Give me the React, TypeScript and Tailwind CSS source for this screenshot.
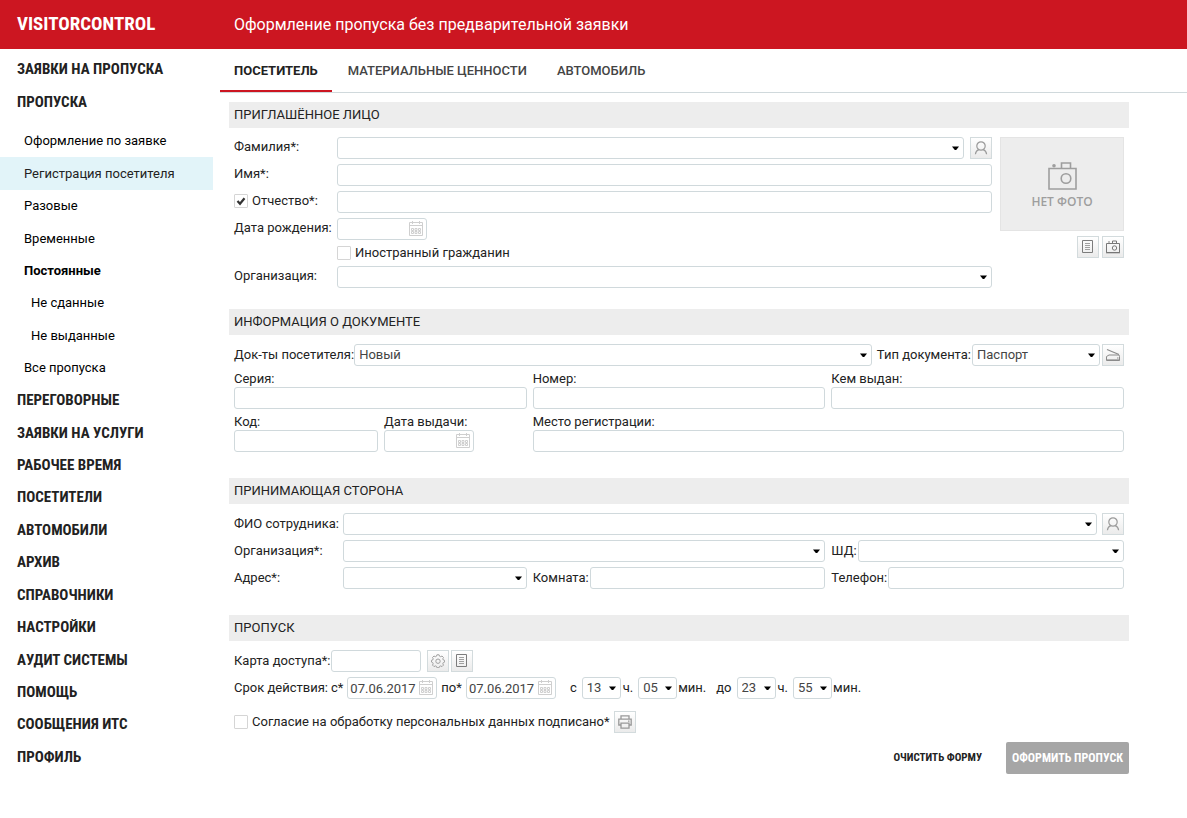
import { useState } from 'react';
import type { InputHTMLAttributes, ReactNode } from 'react';
import clsx from 'clsx';

const topMenu = ['Заявки на пропуска', 'Пропуска'];

const passMenu = [
  { title: 'Оформление по заявке' },
  { title: 'Регистрация посетителя', active: true },
  { title: 'Разовые' },
  { title: 'Временные' },
  { title: 'Постоянные', bold: true },
  { title: 'Не сданные', nested: true },
  { title: 'Не выданные', nested: true },
  { title: 'Все пропуска' },
];

const bottomMenu = [
  'Переговорные',
  'Заявки на услуги',
  'Рабочее время',
  'Посетители',
  'Автомобили',
  'Архив',
  'Справочники',
  'Настройки',
  'Аудит системы',
  'Помощь',
  'Сообщения ИТС',
  'Профиль',
];

const tabs = ['Посетитель', 'Материальные ценности', 'Автомобиль'];

function PersonIcon() {
  return (
    <svg width="14" height="14" viewBox="0 0 14 14" fill="none" stroke="#9a9a9a" strokeWidth="1.2">
      <circle cx="7" cy="5" r="4.2" />
      <path d="M4.8 8.6C2.8 9.4 1.6 11 1.4 13.2M9.2 8.6c2 .8 3.2 2.4 3.4 4.6" />
    </svg>
  );
}

function ListIcon() {
  return (
    <svg width="12" height="14" viewBox="0 0 12 14" fill="none" stroke="#7c7c7c">
      <path d="M.5 .5h10v12H.5z" />
      <path d="M3 3.5h5M3 5.5h5M3 7.5h5M3 9.5h5" stroke="#a0a0a0" />
    </svg>
  );
}

function CameraIcon() {
  return (
    <svg width="14" height="14" viewBox="0 0 14 14" fill="none" stroke="#777">
      <path d="M.5 3.5h13v9H.5zM6.5 3V1h4v2" />
      <path d="M0 12.800h14" />
      <circle cx="8.500" cy="8" r="2.200" />
      <circle cx="3" cy="2" r=".8" fill="#777" stroke="none" />
    </svg>
  );
}

function ScannerIcon() {
  return (
    <svg width="14" height="14" viewBox="0 0 14 14" fill="none" stroke="#8a8a8a">
      <path d="M1 1.500l12 5" strokeWidth="1.200" />
      <path d="M.5 12.500v-4l2.500-1.500h10l.5 1.500v4z" />
      <path d="M1 11.900h12.500" />
      <path d="M11 10h1.500" />
    </svg>
  );
}

function GearIcon() {
  return (
    <svg width="14" height="14" viewBox="0 0 14 14" fill="none" stroke="#a0a0a0">
      <path d="M5.900 .8h2.200l.4 1.400 1.200.5 1.300-.7 1.500 1.500-.7 1.300.5 1.200 1.300.3v1.800l-1.300.5-.5 1.200.7 1.300-1.500 1.500-1.300-.7-1.200.5-.4 1.300H5.900l-.4-1.300-1.200-.5-1.300.7-1.500-1.500.7-1.300-.5-1.200-1.200-.5V6.300l1.200-.3.500-1.200-.7-1.300L3 2l1.300.7 1.200-.5z" />
      <circle cx="7" cy="7.200" r="2.200" />
    </svg>
  );
}

function PrinterIcon() {
  return (
    <svg width="14" height="14" viewBox="0 0 14 14" fill="none" stroke="#999" strokeWidth="1.300">
      <path d="M3 4V.8h8V4M3 10H.8V4.200h12.400V10H11" />
      <path d="M3 8.200h8v5H3z" />
      <path d="M10 6.200h1.500" />
    </svg>
  );
}

function CalendarIcon() {
  return (
    <svg
      className="pointer-events-none absolute top-[3px] right-1"
      width="14"
      height="15"
      viewBox="0 0 14 15"
      fill="none"
      stroke="#cfcfcf"
    >
      <path d="M.5 1.500h13v13H.5zM0 4.500h14M3.500 0v3M10.500 0v3" />
      <path d="M2.500 7.500h2v2h-2zM6 7.500h2v2H6zM9.500 7.500h2v2h-2zM2.500 10.500h2v2h-2zM6 10.500h2v2H6zM9.500 10.500h2v2h-2z" />
    </svg>
  );
}

function PhotoStub() {
  return (
    <div className="flex h-[94px] flex-col items-center border border-[#e4e4e4] bg-[#ededed] pt-6 text-[#9e9e9e]">
      <svg width="30" height="28" viewBox="0 0 30 28" fill="none" stroke="currentColor" strokeWidth="1.600">
        <path d="M2 6.500h27V27H2zM14.500 6V1h9v5" />
        <circle cx="19" cy="16.500" r="4.800" />
        <circle cx="7" cy="3.800" r="1.800" fill="currentColor" stroke="none" />
      </svg>
      <span className="mt-1 font-['Open_Sans',sans-serif] text-[12px] leading-4 font-semibold">НЕТ ФОТО</span>
    </div>
  );
}

function IconButton({ label, children }: { label: string; children: ReactNode }) {
  return (
    <button
      type="button"
      aria-label={label}
      className="flex size-[22px] shrink-0 items-center justify-center border border-[#d3dbdd] bg-linear-to-b from-white to-[#ebebeb]"
    >
      {children}
    </button>
  );
}

function TextInput({ className, ...props }: InputHTMLAttributes<HTMLInputElement>) {
  return (
    <input
      type="text"
      className={clsx('h-[22px] min-w-0 rounded-[3px] border border-[#d0d9dc] bg-white px-1', className)}
      {...props}
    />
  );
}

function DateInput({ id, value }: { id: string; value?: string }) {
  return (
    <div className="relative w-[90px]">
      <input
        id={id}
        type="text"
        defaultValue={value}
        className="block h-[22px] w-full rounded-[3px] border border-[#d0d9dc] bg-white pr-[20px] pl-[2px] text-[#444]"
      />
      <CalendarIcon />
    </div>
  );
}

interface SelectProps {
  id: string;
  label?: string;
  options?: string[];
  className?: string;
}

function Select({ id, label, options = [''], className }: SelectProps) {
  return (
    <div className={clsx('relative min-w-0', className)}>
      <select
        id={id}
        aria-label={label}
        className="block h-[22px] w-full appearance-none rounded-[3px] border border-[#d0d9dc] bg-white pr-4 pl-1 text-[#444]"
      >
        {options.map((o) => (
          <option key={o}>{o}</option>
        ))}
      </select>
      <svg className="pointer-events-none absolute top-[9px] right-[5px]" width="7" height="4" viewBox="0 0 7 4">
        <path d="M0 .5h7L4.200 4H2.800z" />
      </svg>
    </div>
  );
}

function Checkbox({ id, label, checked = false }: { id: string; label?: string; checked?: boolean }) {
  const [on, setOn] = useState(checked);
  return (
    <span className="relative block size-[14px] shrink-0">
      <input
        id={id}
        type="checkbox"
        aria-label={label}
        checked={on}
        onChange={() => setOn(!on)}
        className="block size-[14px] appearance-none rounded-[1px] border border-[#d5d5d5] bg-white"
      />
      {on && (
        <svg className="pointer-events-none absolute inset-0" width="14" height="14" viewBox="0 0 14 14" fill="none">
          <path d="M3.500 7l2.500 2.800 4.500-5.600" stroke="#333" strokeWidth="2.200" />
        </svg>
      )}
    </span>
  );
}

function Section({ title, className, children }: { title: string; className?: string; children: ReactNode }) {
  return (
    <section className={className}>
      <h2 className="bg-[#ededed] px-[5px] leading-[26px] uppercase">{title}</h2>
      <div className="mt-[9px] px-[5px]">{children}</div>
    </section>
  );
}

function MenuLink({ title }: { title: string }) {
  return (
    <li className="flex items-center">
      <a href="#" className="pl-[17px] font-['Roboto_Condensed',Roboto,sans-serif] text-[15px] leading-5 font-bold uppercase">
        {title}
      </a>
    </li>
  );
}

function Sidebar() {
  return (
    <nav className="w-[213px] shrink-0 pt-1">
      <ul className="grid min-h-[65px] auto-rows-fr">
        {topMenu.map((title) => (
          <MenuLink key={title} title={title} />
        ))}
      </ul>
      <ul className="mt-[7px] grid min-h-[259px] auto-rows-fr text-black">
        {passMenu.map((item) => (
          <li
            key={item.title}
            className={clsx('flex items-center', item.nested ? 'pl-[31px]' : 'pl-6', item.active && 'bg-[#e2f4f9]')}
          >
            <a href="#" className={clsx(item.bold && 'font-bold', item.active && 'text-[#222]')}>
              {item.title}
            </a>
          </li>
        ))}
      </ul>
      <ul className="grid min-h-[389px] auto-rows-fr">
        {bottomMenu.map((title) => (
          <MenuLink key={title} title={title} />
        ))}
      </ul>
    </nav>
  );
}

function VisitorSection() {
  return (
    <Section title="Приглашённое лицо">
      <div className="flex gap-2">
        <div className="grid flex-1 grid-cols-[103px_1fr] gap-y-[5px] leading-5">
          <label htmlFor="surname">Фамилия*:</label>
          <div className="flex gap-[6px]">
            <Select id="surname" className="flex-1" />
            <IconButton label="Выбрать посетителя">
              <PersonIcon />
            </IconButton>
          </div>
          <label htmlFor="name">Имя*:</label>
          <TextInput id="name" />
          <div className="flex h-5 items-center gap-1">
            <Checkbox id="hasPatronymic" label="Есть отчество" checked />
            <label htmlFor="patronymic">Отчество*:</label>
          </div>
          <TextInput id="patronymic" />
          <label htmlFor="birthday">Дата рождения:</label>
          <DateInput id="birthday" />
          <div className="col-start-2 flex h-4 items-center gap-1">
            <Checkbox id="foreign" />
            <label htmlFor="foreign">Иностранный гражданин</label>
          </div>
          <label htmlFor="visitorOrg" className="col-start-1">Организация:</label>
          <Select id="visitorOrg" />
        </div>
        <div className="w-[124px]">
          <PhotoStub />
          <div className="mt-[5px] flex justify-end gap-[3px]">
            <IconButton label="Список фото">
              <ListIcon />
            </IconButton>
            <IconButton label="Сделать фото">
              <CameraIcon />
            </IconButton>
          </div>
        </div>
      </div>
    </Section>
  );
}

function DocumentSection() {
  return (
    <Section title="Информация о документе" className="mt-[21px]">
      <div className="flex items-center">
        <label htmlFor="docs">Док-ты посетителя:</label>
        <Select id="docs" options={['Новый']} className="flex-1" />
        <label htmlFor="docType" className="ml-[5px]">
          Тип документа:
        </label>
        <Select id="docType" options={['Паспорт']} className="mr-[2px] ml-px w-[128px]" />
        <IconButton label="Сканировать">
          <ScannerIcon />
        </IconButton>
      </div>
      <div className="mt-[5px] grid grid-cols-3 gap-x-[6px] gap-y-[5px]">
        <div className="flex flex-col">
          <label htmlFor="series" className="leading-4">Серия:</label>
          <TextInput id="series" />
        </div>
        <div className="flex flex-col">
          <label htmlFor="number" className="leading-4">Номер:</label>
          <TextInput id="number" />
        </div>
        <div className="flex flex-col">
          <label htmlFor="issuedBy" className="leading-4">Кем выдан:</label>
          <TextInput id="issuedBy" />
        </div>
        <div className="flex gap-[6px]">
          <div className="flex w-[144px] flex-col">
            <label htmlFor="code" className="leading-4">Код:</label>
            <TextInput id="code" />
          </div>
          <div className="flex flex-col">
            <label htmlFor="issueDate" className="leading-4">Дата выдачи:</label>
            <DateInput id="issueDate" />
          </div>
        </div>
        <div className="col-span-2 flex flex-col">
          <label htmlFor="address" className="leading-4">Место регистрации:</label>
          <TextInput id="address" />
        </div>
      </div>
    </Section>
  );
}

function HostSection() {
  return (
    <Section title="Принимающая сторона" className="mt-[26px]">
      <div className="grid grid-cols-3 gap-x-[6px] gap-y-[5px]">
        <div className="col-span-3 flex items-center">
          <label htmlFor="employee" className="w-[109px]">ФИО сотрудника:</label>
          <Select id="employee" className="mr-[5px] flex-1" />
          <IconButton label="Выбрать сотрудника">
            <PersonIcon />
          </IconButton>
        </div>
        <div className="col-span-2 flex items-center">
          <label htmlFor="hostOrg" className="w-[109px]">Организация*:</label>
          <Select id="hostOrg" className="flex-1" />
        </div>
        <div className="flex items-center gap-px">
          <label htmlFor="shd">ШД:</label>
          <Select id="shd" className="flex-1" />
        </div>
        <div className="flex items-center">
          <label htmlFor="hostAddress" className="w-[109px]">Адрес*:</label>
          <Select id="hostAddress" className="flex-1" />
        </div>
        <div className="flex items-center gap-px">
          <label htmlFor="room">Комната:</label>
          <TextInput id="room" className="flex-1" />
        </div>
        <div className="flex items-center gap-px">
          <label htmlFor="phone">Телефон:</label>
          <TextInput id="phone" className="flex-1" />
        </div>
      </div>
    </Section>
  );
}

function PassSection() {
  return (
    <Section title="Пропуск" className="mt-[26px]">
      <div className="flex items-center">
        <label htmlFor="card">Карта доступа*:</label>
        <TextInput id="card" className="mr-[6px] w-[90px]" />
        <div className="flex gap-[2px]">
          <IconButton label="Считать карту">
            <GearIcon />
          </IconButton>
          <IconButton label="Список карт">
            <ListIcon />
          </IconButton>
        </div>
      </div>
      <div className="mt-[5px] flex items-center">
        <span className="mr-[3px]">Срок действия:</span>
        <label htmlFor="dateFrom" className="mr-1">с*</label>
        <DateInput id="dateFrom" value="07.06.2017" />
        <label htmlFor="dateTo" className="mx-1">по*</label>
        <DateInput id="dateTo" value="07.06.2017" />
        <label htmlFor="hourFrom" className="mr-[5px] ml-[14px]">с</label>
        <Select id="hourFrom" options={['13']} className="w-[39px]" />
        <span className="mr-[5px] ml-[2px]">ч.</span>
        <Select id="minuteFrom" label="Минуты начала" options={['05']} className="w-[39px]" />
        <span className="ml-px">мин.</span>
        <label htmlFor="hourTo" className="mr-[5px] ml-[10px]">до</label>
        <Select id="hourTo" options={['23']} className="w-[39px]" />
        <span className="mr-[5px] ml-[2px]">ч.</span>
        <Select id="minuteTo" label="Минуты окончания" options={['55']} className="w-[39px]" />
        <span className="ml-px">мин.</span>
      </div>
      <div className="mt-3 flex items-center">
        <Checkbox id="consent" />
        <label htmlFor="consent" className="mx-1">
          Согласие на обработку персональных данных подписано*
        </label>
        <IconButton label="Печать">
          <PrinterIcon />
        </IconButton>
      </div>
    </Section>
  );
}

export default function App() {
  return (
    <div className="min-h-screen bg-white font-[Roboto,'Liberation_Sans',sans-serif] text-[13px] text-[#222]">
      <header className="flex h-[49px] items-center bg-[#cc1621] text-white">
        <div className="w-[234px] shrink-0 pl-[17px] font-['Roboto_Condensed',Roboto,sans-serif] text-[19px] font-bold">
          VISITORCONTROL
        </div>
        <h1 className="text-base">Оформление пропуска без предварительной заявки</h1>
      </header>
      <div className="flex">
        <Sidebar />
        <main className="ml-[7px] min-w-0 flex-1">
          <div role="tablist" className="flex h-11 gap-[2px] border-b border-[#d0d9dc]">
            {tabs.map((tab, i) => (
              <button
                key={tab}
                type="button"
                role="tab"
                aria-selected={i === 0}
                className={clsx(
                  'border-b-2 px-[14px] pt-[2px] uppercase',
                  i === 0 ? 'border-[#cc1621] font-bold text-[#222]' : 'border-transparent font-medium text-[#444]',
                )}
              >
                {tab}
              </button>
            ))}
          </div>
          <form className="mt-[9px] mr-[58px] ml-[9px]" onSubmit={(e) => e.preventDefault()}>
            <VisitorSection />
            <DocumentSection />
            <HostSection />
            <PassSection />
            <div className="mt-[9px] flex items-center justify-end gap-4 font-['Roboto_Condensed',Roboto,sans-serif] font-bold">
              <button type="reset" className="h-8 px-2 text-[11px] uppercase">
                Очистить форму
              </button>
              <button type="submit" className="h-8 rounded-[2px] bg-[#a6a6a6] px-[6px] text-[12px] text-white uppercase">
                Оформить пропуск
              </button>
            </div>
          </form>
        </main>
      </div>
    </div>
  );
}
